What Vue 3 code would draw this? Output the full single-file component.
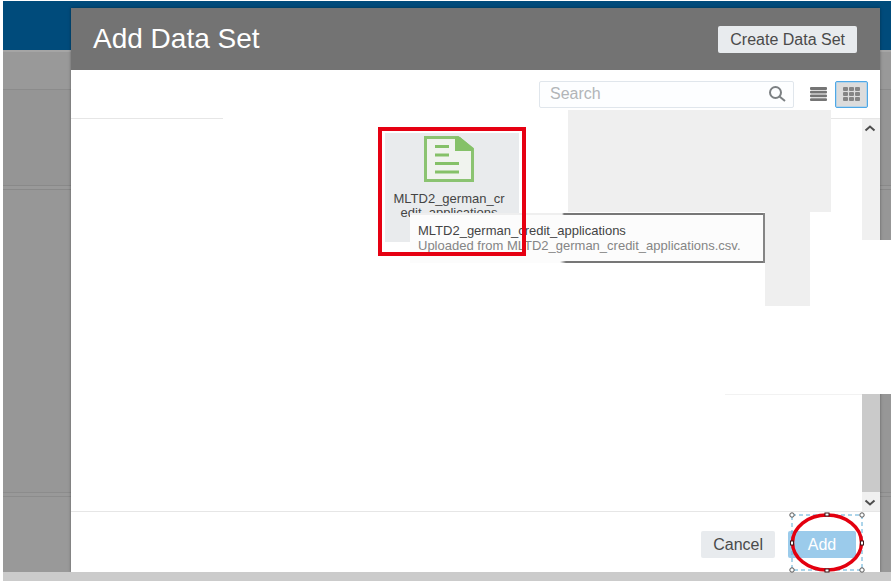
<script setup>
import { ref } from 'vue'

const query = ref('')
const view = ref('grid')
const dataSet = 'MLTD2_german_credit_applications'
const cells = [0, 6, 12]
</script>

<template>
  <main class="page">
    <div class="stage">
      <section class="dialog" role="dialog" aria-labelledby="dialog-title">
        <header class="head">
          <h1 id="dialog-title">Add Data Set</h1>
          <button type="button" class="btn">Create Data Set</button>
        </header>

        <div class="toolbar">
          <label class="search">
            <input v-model="query" type="text" placeholder="Search" aria-label="Search" />
            <svg width="18" height="18" viewBox="0 0 18 18" fill="none" stroke="#7c8083" stroke-width="2">
              <circle cx="7.5" cy="7.5" r="5.5" />
              <path d="M11.5 11.5 L17 16" />
            </svg>
          </label>
          <button type="button" class="view" :class="{ on: view === 'list' }" aria-label="List view" @click="view = 'list'">
            <svg width="17" height="14" viewBox="0 0 17 14" fill="#757575">
              <rect y="0" width="17" height="3" rx="1" />
              <rect y="3.8" width="17" height="2.8" rx="1" />
              <rect y="7.5" width="17" height="2.8" rx="1" />
              <rect y="11.2" width="17" height="2.8" rx="1" />
            </svg>
          </button>
          <button type="button" class="view" :class="{ on: view === 'grid' }" aria-label="Grid view" @click="view = 'grid'">
            <svg width="17" height="14" viewBox="0 0 17 14" fill="#858585">
              <template v-for="x in cells" :key="x">
                <rect v-for="y in [0, 5, 10]" :key="y" :x="x" :y="y" width="5" height="4" rx="1" />
              </template>
            </svg>
          </button>
        </div>

        <div class="rules"><span></span><span></span></div>

        <div class="body">
          <div class="items">
            <div class="panel wide"></div>
            <div class="panel narrow"></div>
            <div class="tile">
              <svg width="50" height="46" viewBox="0 0 50 46">
                <path d="M1.5 1.5 H34 L48.5 13 V44.5 H1.5 Z" fill="#f0f3ee" stroke="#8bc371" stroke-width="3" />
                <path d="M31 1 H36 L49 12 V15 H31 Z" fill="#85c168" />
                <path d="M11 10.5 H25 M11 19 H25 M11 27.5 H35 M11 36 H35" stroke="#85c168" stroke-width="3" />
              </svg>
              <span class="name">{{ dataSet }}</span>
              <div class="tip" role="tooltip">
                <strong>{{ dataSet }}</strong>
                <span>Uploaded from {{ dataSet }}.csv.</span>
              </div>
              <div class="mark"></div>
            </div>
          </div>
          <div class="scroll">
            <div class="track">
              <svg width="12" height="8" viewBox="0 0 12 8" fill="none" stroke="#4e4e4e" stroke-width="2"><path d="M1.5 6.5 L6 2.5 L10.5 6.5" /></svg>
            </div>
            <div class="thumb"></div>
            <div class="down">
              <svg width="12" height="8" viewBox="0 0 12 8" fill="none" stroke="#4e4e4e" stroke-width="2"><path d="M1.5 1.5 L6 5.5 L10.5 1.5" /></svg>
            </div>
          </div>
          <div class="blank"></div>
        </div>

        <footer class="foot">
          <button type="button" class="btn">Cancel</button>
          <div class="primary">
            <button type="button" class="btn add">Add</button>
            <svg class="ring" width="76" height="62" viewBox="0 0 76 62" fill="none">
              <rect x="3" y="3" width="70" height="55" stroke="#5aabd6" stroke-dasharray="4 3" />
              <ellipse cx="38" cy="30.5" rx="34.5" ry="27.5" stroke="#e3000f" stroke-width="3.5" />
              <g fill="#fff" stroke="#555">
                <circle cx="3" cy="3" r="2.2" /><circle cx="73" cy="3" r="2.2" />
                <circle cx="3" cy="58" r="2.2" /><circle cx="73" cy="58" r="2.2" />
              </g>
              <g fill="#fff" stroke="#3b1416">
                <rect x="36" y="1" width="4" height="3" /><rect x="36" y="57" width="4" height="3" />
                <rect x="1.5" y="29" width="3" height="4" /><rect x="71.5" y="29" width="3" height="4" />
              </g>
            </svg>
          </div>
        </footer>
      </section>
    </div>
    <div class="base"></div>
  </main>
</template>

<style>
body {
  margin: 0;
  background: #fff;
}
</style>

<style scoped>
* {
  box-sizing: border-box;
}
.page {
  padding: 1px 5px 4px 3px;
  font-family: "Liberation Sans", Arial, sans-serif;
  color: #4a4a4a;
}
.stage {
  padding: 7px 11px 0 68px;
  background: linear-gradient(
    #004b7b 0 49px, #a5a5a5 49px 51px, #999 51px 88px, #8b8b8b 88px 89px,
    #959595 89px 184px, #898989 184px 185px, #999 185px 188px, #898989 188px 189px,
    #979797 189px 491px, #8c8c8c 491px 492px, #999 492px 495px, #8c8c8c 495px 496px, #999 496px);
}
.dialog {
  background: #fff;
  box-shadow: 0 0 3px rgba(0, 0, 0, 0.35);
}
.head {
  display: flex;
  align-items: center;
  justify-content: space-between;
  height: 62px;
  padding: 0 23px 0 22px;
  background: #737373;
}
h1 {
  margin: 0;
  font-size: 28px;
  line-height: 32px;
  font-weight: 400;
  color: #fff;
}
.btn {
  height: 27px;
  padding: 0 12px;
  border: 0;
  border-radius: 2px;
  background: #e8ebee;
  font: 16px/27px "Liberation Sans", Arial, sans-serif;
  color: #4a4a4a;
}
.toolbar {
  display: flex;
  align-items: center;
  justify-content: flex-end;
  height: 48px;
  padding: 0 12px 0 0;
}
.search {
  display: flex;
  align-items: center;
  width: 255px;
  height: 27px;
  margin-right: 8px;
  padding: 0 7px 0 10px;
  border: 1px solid #e0e6ec;
  border-radius: 2px;
  background: #fdfeff;
}
.search input {
  flex: 1;
  min-width: 0;
  padding: 0;
  border: 0;
  outline: 0;
  background: transparent;
  font: 16px/20px "Liberation Sans", Arial, sans-serif;
  color: #4a4a4a;
}
.search input::placeholder {
  color: #b2b5b8;
  opacity: 1;
}
.view {
  display: flex;
  align-items: center;
  justify-content: center;
  width: 33px;
  height: 27px;
  padding: 0;
  border: 1px solid transparent;
  border-radius: 2px;
  background: transparent;
}
.view.on {
  border: 1px solid #4fa8e6;
  background: #dcdcdc;
  box-shadow: inset 0 0 0 1px #b5d3e8;
}
.rules {
  display: flex;
  justify-content: space-between;
}
.rules span {
  width: 152px;
  height: 1px;
  background: #e6e6e6;
}
.rules span + span {
  width: 49px;
}
.body {
  position: relative;
  display: flex;
}
.items {
  position: relative;
  flex: 1;
  padding: 14px 0 0 314px;
}
.panel {
  position: absolute;
  background: #efefef;
}
.wide {
  top: -9px;
  right: 31px;
  width: 263px;
  height: 102px;
}
.narrow {
  top: 93px;
  right: 52px;
  width: 45px;
  height: 94px;
}
.tile {
  position: relative;
  display: flex;
  flex-direction: column;
  align-items: center;
  gap: 10px;
  width: 134px;
  height: 109px;
  padding: 3px 6px 0 0;
  background: #e9ebed;
}
.name {
  width: 116px;
  font-size: 13px;
  line-height: 14px;
  text-align: center;
  word-break: break-all;
  color: #444;
}
.tip {
  position: absolute;
  top: 80px;
  left: 25px;
  display: flex;
  flex-direction: column;
  width: 355px;
  height: 50px;
  padding: 10px 0 0 8px;
  background:
    linear-gradient(90deg, #efefef 0 152px, #777 154px) top / 100% 2px no-repeat,
    linear-gradient(90deg, transparent 0 150px, #777 156px) bottom / 100% 2px no-repeat,
    #fcfcfc;
  border-right: 2px solid #858585;
  font-size: 13px;
  line-height: 15px;
  white-space: nowrap;
  color: #858585;
}
.tip strong {
  font-weight: 400;
  color: #444;
}
.mark {
  position: absolute;
  top: -6px;
  left: -7px;
  width: 148px;
  height: 129px;
  border: 4px solid #e60012;
}
.scroll {
  display: flex;
  flex-direction: column;
  width: 18px;
}
.track {
  height: 121px;
  padding: 5px 0 0 2px;
  background: #f0f0f0;
}
.track svg,
.down svg {
  display: block;
}
.thumb {
  height: 98px;
  margin-top: 154px;
  background: #cacaca;
}
.down {
  height: 19px;
  padding: 7px 0 0 2px;
  background: #f0f0f0;
}
.blank {
  position: absolute;
  top: 121px;
  right: -11px;
  width: 29px;
  height: 154px;
  background: #fff;
}
.blank::after {
  content: "";
  position: absolute;
  right: 29px;
  bottom: -1px;
  width: 137px;
  height: 1px;
  background: #f2f2f2;
}
.foot {
  display: flex;
  align-items: center;
  justify-content: flex-end;
  gap: 13px;
  height: 61px;
  padding: 4px 24px 0 0;
  border-top: 1px solid #e6e6e6;
}
.primary {
  position: relative;
}
.add {
  display: block;
  width: 68px;
  background: #9bcbeb;
  color: #fff;
}
.ring {
  position: absolute;
  top: -19px;
  left: 1px;
}
.base {
  height: 9px;
  background: #cbcbcb;
}
</style>
